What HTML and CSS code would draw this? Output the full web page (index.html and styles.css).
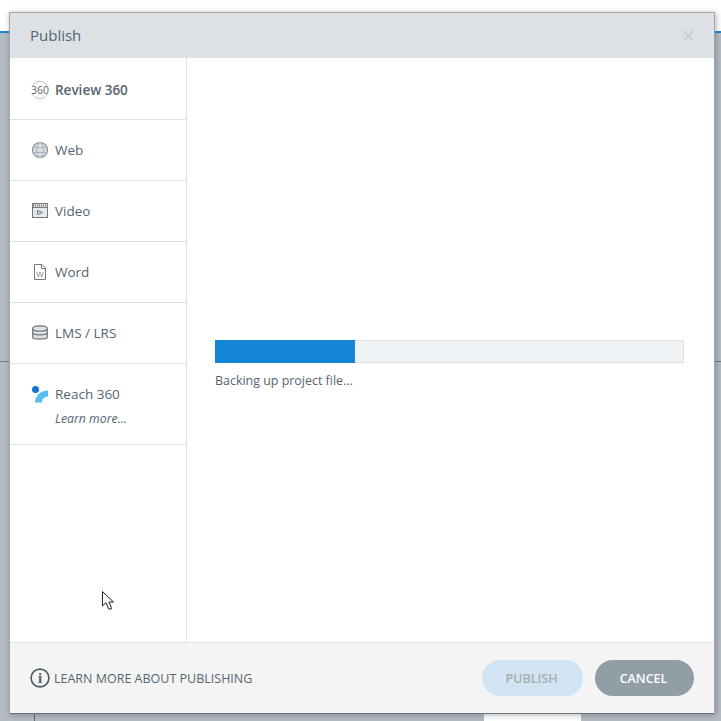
FILE: index.html
```html
<!DOCTYPE html>
<html lang="en">
<head>
    <meta charset="UTF-8">
    <title>Publish</title>
    <link rel="stylesheet" href="styles.css">
</head>
<body>
    <div class="backdrop">
        <div class="backdrop-top"></div>
        <div class="backdrop-line-left"></div>
        <div class="backdrop-line-right"></div>
        <div class="backdrop-tick"></div>
        <div class="backdrop-tab"></div>
    </div>

    <div class="dialog">
        <div class="dialog-header">
            <span class="dialog-title">Publish</span>
            <svg class="close-icon" width="11" height="11" viewBox="0 0 11 11">
                <path d="M1 1L10 10M10 1L1 10" stroke="#cbd0d4" stroke-width="2.4" fill="none"/>
            </svg>
        </div>

        <div class="dialog-body">
            <div class="sidebar">
                <div class="nav-item nav-first">
                    <svg class="nav-icon" width="20" height="20" viewBox="0 0 20 20">
                        <circle cx="10" cy="10" r="8.6" fill="none" stroke="#b7c7cd" stroke-width="1"/>
                        <rect x="0" y="6" width="20" height="8" fill="#fff"/>
                        <text x="10" y="13.6" class="icon-360">360</text>
                    </svg>
                    <span class="nav-label nav-label-bold">Review 360</span>
                </div>
                <div class="nav-item">
                    <svg class="nav-icon" width="20" height="20" viewBox="0 0 20 20">
                        <circle cx="10" cy="10" r="7.5" fill="#d8dde0" stroke="#868f94" stroke-width="1.2"/>
                        <ellipse cx="10" cy="10" rx="3.4" ry="7.5" fill="none" stroke="#a9b2b7" stroke-width="1"/>
                        <path d="M2.5 7.5H17.5M2.5 12.5H17.5" stroke="#a9b2b7" stroke-width="1"/>
                    </svg>
                    <span class="nav-label">Web</span>
                </div>
                <div class="nav-item">
                    <svg class="nav-icon" width="20" height="20" viewBox="0 0 20 20">
                        <rect x="2.5" y="2.5" width="15" height="14" fill="#e4e8ea" stroke="#74797c"/>
                        <path d="M3 4.5H17" stroke="#74797c" stroke-dasharray="1 1" stroke-width="2"/>
                        <path d="M3 6.5H17" stroke="#74797c"/>
                        <path d="M7.5 9.5V13.5L12.5 11.5Z" fill="none" stroke="#74797c"/>
                    </svg>
                    <span class="nav-label">Video</span>
                </div>
                <div class="nav-item">
                    <svg class="nav-icon" width="20" height="20" viewBox="0 0 20 20">
                        <path d="M4.5 2.5H12L15.5 6V17.5H4.5Z" fill="#fff" stroke="#74797c"/>
                        <path d="M11.5 2.5V6.5H15.5" fill="none" stroke="#74797c"/>
                        <text x="10" y="14.5" class="icon-w">W</text>
                    </svg>
                    <span class="nav-label">Word</span>
                </div>
                <div class="nav-item">
                    <svg class="nav-icon" width="20" height="20" viewBox="0 0 20 20">
                        <path d="M2.7 5.5V14.5C2.7 16.6 17.3 16.6 17.3 14.5V5.5" fill="#dfe3e5" stroke="#74797c" stroke-width="1.3"/>
                        <ellipse cx="10" cy="5.5" rx="7.3" ry="2.7" fill="#dfe3e5" stroke="#74797c" stroke-width="1.3"/>
                        <path d="M2.7 10C2.7 12.4 17.3 12.4 17.3 10" fill="none" stroke="#74797c" stroke-width="1.3"/>
                    </svg>
                    <span class="nav-label">LMS / LRS</span>
                </div>
                <div class="nav-item nav-reach">
                    <svg class="nav-icon" width="20" height="20" viewBox="0 0 20 20">
                        <circle cx="5.5" cy="4.5" r="3.5" fill="#0d78d4"/>
                        <path d="M5 17.5C5 11 10.5 5.5 18 5.5V11.5C14.5 11.5 12 14 12 17.5Z" fill="#56bdf3"/>
                    </svg>
                    <div class="reach-text">
                        <span class="nav-label">Reach 360</span>
                        <span class="learn-more">Learn more...</span>
                    </div>
                </div>
                <svg class="cursor" width="14" height="21" viewBox="0 0 14 21">
                    <path d="M1.5 1.5V16L5 12.7L7.7 19H10.3L10.3 17.5L8 12H12.5Z" fill="#fff" stroke="#1b1f24" stroke-width="1"/>
                </svg>
            </div>

            <div class="content">
                <div class="progress">
                    <div class="progress-fill" style="width: 30%"></div>
                </div>
                <div class="progress-text">Backing up project file...</div>
            </div>
        </div>

        <div class="dialog-footer">
            <div class="footer-help">
                <svg width="20" height="20" viewBox="0 0 20 20">
                    <circle cx="10" cy="10" r="8.9" fill="none" stroke="#4f5f69" stroke-width="1.7"/>
                    <text x="10" y="15" class="icon-i">i</text>
                </svg>
                <span>LEARN MORE ABOUT PUBLISHING</span>
            </div>
            <div class="footer-buttons">
                <button class="btn btn-publish">PUBLISH</button>
                <button class="btn btn-cancel">CANCEL</button>
            </div>
        </div>
    </div>
</body>
</html>
```

FILE: styles.css
```css
html, body {
    margin: 0;
    height: 100%;
}
body {
    position: relative;
    width: 721px;
    height: 721px;
    overflow: hidden;
    background: #b4bbc2;
    font-family: "Open Sans", "Noto Sans", Arial, sans-serif;
    color: #4f5f69;
}
.backdrop-top {
    position: absolute;
    top: 0;
    left: 0;
    width: 100%;
    height: 31px;
    background: #fff;
    border-bottom: 2px solid #1585d8;
}
.backdrop-line-left,
.backdrop-line-right {
    position: absolute;
    top: 361px;
    height: 1px;
    background: #6f7b84;
}
.backdrop-line-left {
    left: 0;
    width: 10px;
}
.backdrop-line-right {
    right: 0;
    width: 7px;
}
.backdrop-tick {
    position: absolute;
    left: 34px;
    top: 713px;
    width: 1px;
    height: 8px;
    background: #5e676e;
}
.backdrop-tab {
    position: absolute;
    left: 484px;
    top: 714px;
    width: 97px;
    height: 7px;
    background: #fff;
}
.dialog {
    position: absolute;
    left: 9px;
    top: 12px;
    width: 706px;
    height: 702px;
    display: flex;
    flex-direction: column;
    background: #fff;
    border: 1px solid #a3a7aa;
    border-bottom-color: #6b7278;
    box-sizing: border-box;
    box-shadow: 1px 1px 6px rgba(60, 70, 80, 0.4);
}
.dialog-header {
    display: flex;
    align-items: center;
    justify-content: space-between;
    height: 45px;
    flex: none;
    padding: 0 20px;
    background: #dde1e5;
}
.dialog-title {
    padding-bottom: 2px;
    font-size: 15px;
    color: #4f6676;
}
.dialog-body {
    flex: 1;
    display: flex;
    min-height: 0;
}
.sidebar {
    position: relative;
    width: 177px;
    flex: none;
    box-sizing: border-box;
    border-right: 1px solid #dde1e5;
}
.nav-item {
    display: flex;
    align-items: center;
    gap: 5px;
    height: 61px;
    box-sizing: border-box;
    padding-left: 20px;
    border-bottom: 1px solid #dde1e5;
}
.nav-first {
    height: 62px;
    padding-top: 2px;
}
.nav-icon {
    flex: none;
}
.nav-label {
    font-size: 13.5px;
    color: #54656f;
}
.nav-label-bold {
    font-weight: 600;
}
.icon-360 {
    font-size: 10.5px;
    fill: #666;
    text-anchor: middle;
}
.icon-w {
    font-size: 8px;
    fill: #777;
    text-anchor: middle;
}
.nav-reach {
    height: 81px;
    align-items: flex-start;
    padding-top: 20px;
}
.nav-reach .nav-icon {
    margin-top: 1px;
}
.reach-text {
    display: flex;
    flex-direction: column;
    gap: 7px;
    margin-top: 1px;
}
.learn-more {
    font-size: 12.3px;
    font-style: italic;
    color: #54656f;
}
.cursor {
    position: absolute;
    left: 91px;
    top: 532px;
}
.content {
    flex: 1;
    padding: 282px 30px 0 28px;
}
.progress {
    height: 23px;
    background: #eff2f5;
    box-sizing: border-box;
    border: 1px solid #dde1e5;
    border-left: none;
    position: relative;
}
.progress-fill {
    position: absolute;
    left: 0;
    top: -1px;
    bottom: -1px;
    background: #1285d6;
}
.progress-text {
    margin-top: 9px;
    font-size: 12.45px;
    color: #54656f;
}
.dialog-footer {
    flex: none;
    height: 71px;
    box-sizing: border-box;
    display: flex;
    align-items: center;
    justify-content: space-between;
    padding: 0 20px;
    background: #f4f4f4;
    border-top: 1px solid #dde1e5;
}
.footer-help {
    display: flex;
    align-items: center;
    gap: 4px;
    font-size: 12.5px;
    color: #54656f;
}
.icon-i {
    font-family: "Liberation Serif", serif;
    font-size: 15px;
    font-weight: bold;
    fill: #4f5f69;
    text-anchor: middle;
}
.footer-buttons {
    display: flex;
    gap: 12px;
}
.btn {
    height: 36px;
    border: none;
    border-radius: 18px;
    font-family: inherit;
    font-size: 12.5px;
    font-weight: 600;
    padding: 0 2px 0 0;
}
.btn-publish {
    width: 101px;
    background: #d0e4f3;
    color: #a8adb0;
}
.btn-cancel {
    width: 99px;
    background: #919ea6;
    color: #fff;
}
```
